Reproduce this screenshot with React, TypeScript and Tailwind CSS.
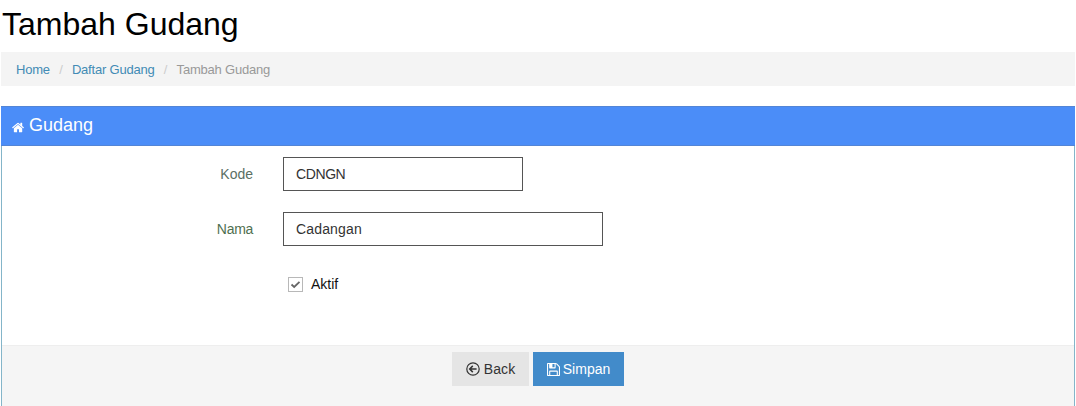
import { useState } from 'react'

const HomeIcon = () => (
  <svg viewBox="0 0 1792 1792" fill="currentColor" className="h-[13px] w-[13px]">
    <path d="M1408 992v480q0 26-19 45t-45 19h-384v-384h-256v384h-384q-26 0-45-19t-19-45v-480q0-1 .5-3t.5-3l575-474 575 474q1 2 1 6zm223-69l-62 74q-8 9-21 11h-3q-13 0-21-7l-692-577-692 577q-12 8-24 7-13-2-21-11l-62-74q-8-10-7-23.5t11-21.5l719-599q32-26 76-26t76 26l244 204v-195q0-14 9-23t23-9h192q14 0 23 9t9 23v408l219 182q10 8 11 21.5t-7 23.5z" />
  </svg>
)

const BackIcon = () => (
  <svg viewBox="0 0 14 14" fill="none" stroke="currentColor" className="h-[14px] w-[14px]">
    <circle cx="7" cy="7" r="6.2" strokeWidth="1.2" />
    <path d="M10.6 7H4M6.8 3.9 3.7 7l3.1 3.1" strokeWidth="1.5" />
  </svg>
)

const SaveIcon = () => (
  <svg viewBox="128 128 1536 1536" fill="currentColor" className="h-[13px] w-[13px]">
    <path d="M512 1536h768v-384h-768v384zm896 0h128v-896q0-14-10-38.5t-20-34.5l-281-281q-10-10-34-20t-39-10v416q0 40-28 68t-68 28h-576q-40 0-68-28t-28-68v-416h-128v1280h128v-416q0-40 28-68t68-28h832q40 0 68 28t28 68v416zm-384-928v-320q0-13-9.5-22.5t-22.5-9.5h-192q-13 0-22.5 9.5t-9.5 22.5v320q0 13 9.5 22.5t22.5 9.5h192q13 0 22.5-9.5t9.5-22.5zm640 32v928q0 40-28 68t-68 28h-1344q-40 0-68-28t-28-68v-1344q0-40 28-68t68-28h928q40 0 88 20t76 48l280 280q28 28 48 76t20 88z" />
  </svg>
)

function App() {
  const [kode, setKode] = useState('CDNGN')
  const [nama, setNama] = useState('Cadangan')
  const [aktif, setAktif] = useState(true)

  return (
    <div className="flex h-[406px] w-full flex-col overflow-hidden bg-white pl-px pr-px font-['Liberation_Sans',Arial,sans-serif] text-sm text-[#333]">
      <h1 className="h-[52px] pl-px pt-[5px] text-[32px] leading-[38px] text-black">Tambah Gudang</h1>

      <ul className="flex h-[34px] items-center bg-[#f4f4f4] pl-[15px] pt-[3px] text-[13px] tracking-[-0.2px] text-[#999]">
        <li className="text-[#428bb5]">Home</li>
        <li className="w-[22px] text-center text-[#ccc]">/</li>
        <li className="text-[#428bb5]">Daftar Gudang</li>
        <li className="w-[22px] text-center text-[#ccc]">/</li>
        <li>Tambah Gudang</li>
      </ul>

      <div className="mt-5 flex flex-1 flex-col border-x border-[#84b5c9]">
        <div className="-mx-px flex h-[40px] items-center gap-[4px] border-y border-[#5385d6] bg-[#4b8df8] pl-[11px] text-white">
          <span className="pt-[2px]"><HomeIcon /></span>
          <h2 className="pb-[2px] text-lg leading-[36px]">Gudang</h2>
        </div>

        <form className="flex flex-1 flex-col" onSubmit={(e) => e.preventDefault()}>
          <div className="flex h-[199px] flex-col pt-[11px]">
            <div className="flex h-[55px] items-start">
              <label htmlFor="kode" className="w-[251px] text-right leading-[34px] text-[#5b6f64]">Kode</label>
              <input id="kode" value={kode} onChange={(e) => setKode(e.target.value)} className="ml-[30px] h-[34px] w-[240px] border border-[#555] bg-white px-3 text-sm tracking-[-0.4px] outline-none" />
            </div>
            <div className="flex h-[55px] items-start">
              <label htmlFor="nama" className="w-[251px] text-right leading-[34px] tracking-[-0.3px] text-[#4f7050]">Nama</label>
              <input id="nama" value={nama} onChange={(e) => setNama(e.target.value)} className="ml-[30px] h-[34px] w-[320px] border border-[#555] bg-white px-3 text-sm tracking-[0.15px] outline-none" />
            </div>
            <label className="ml-[286px] flex h-[34px] items-center gap-2 text-[#111]">
              <input type="checkbox" className="sr-only" checked={aktif} onChange={() => setAktif(!aktif)} />
              <span className="flex h-[15px] w-[15px] items-center justify-center border border-[#b8b8b8] bg-white">
                {aktif && (
                  <svg viewBox="0 0 11 11" fill="none" stroke="#666" strokeWidth="1.8" className="h-[11px] w-[11px]">
                    <path d="M1.5 5.5 4.2 8 9.5 2.8" />
                  </svg>
                )}
              </span>
              <span>Aktif</span>
            </label>
          </div>

          <div className="flex flex-1 items-start border-t border-[#eee] bg-[#f5f5f5] pl-[450px] pt-[6px]">
            <button type="button" className="flex h-[34px] w-[77px] items-center justify-center gap-1 bg-[#e5e5e5] text-[#333]">
              <BackIcon />
              <span className="tracking-[0.1px]">Back</span>
            </button>
            <button type="submit" className="ml-1 flex h-[34px] w-[91px] items-center justify-center gap-[3px] bg-[#428bca] text-white">
              <SaveIcon />
              Simpan
            </button>
          </div>
        </form>
      </div>
    </div>
  )
}

export default App
